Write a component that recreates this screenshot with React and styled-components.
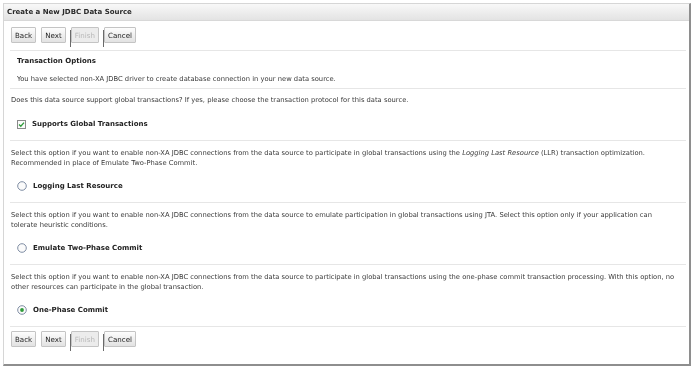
import React from "react";
import styled, { createGlobalStyle } from "styled-components";

const GlobalStyle = createGlobalStyle`
  body {
    margin: 0;
    background: #fff;
    font-family: "DejaVu Sans", Verdana, sans-serif;
    color: #333;
    -webkit-font-smoothing: antialiased;
  }
`;

const Page = styled.div`
  width: 693px;
  height: 368px;
  box-sizing: border-box;
  padding: 3px 2px 2px 3px;
`;

const Frame = styled.div`
  height: 100%;
  box-sizing: border-box;
  border-top: 1px solid #d6d6d6;
  border-left: 1px solid #d6d6d6;
  border-right: 2px solid #8e8e8e;
  border-bottom: 2px solid #8e8e8e;
  display: flex;
  flex-direction: column;
  will-change: transform;
`;

const TitleBar = styled.div`
  height: 16px;
  line-height: 16px;
  padding-left: 3px;
  border-bottom: 1px solid #d8d8d8;
  background: linear-gradient(#f8f8f8, #e3e3e3);
  font-size: 7px;
  font-weight: bold;
  color: #2a2a2a;
`;

const Content = styled.div`
  padding: 0 3px 0 6px;
`;

const ButtonBar = styled.div`
  display: flex;
  gap: 5px;
  padding: ${(p) => (p.$bottom ? "4px 0 0 1px" : "6px 0 7px 1px")};
`;

const Button = styled.button`
  position: relative;
  height: 16px;
  padding: 0 3px;
  margin: 0;
  font-family: "DejaVu Sans", Verdana, sans-serif;
  font-size: 7.1px;
  color: ${(p) => (p.disabled ? "#b8b8b8" : "#222")};
  border: 1px solid #c4c4c4;
  border-radius: 1px;
  background: ${(p) =>
    p.disabled ? "#ececec" : "linear-gradient(#fdfdfd, #e2e2e2)"};

  ${(p) =>
    p.$mark &&
    `
    &::before {
      content: "";
      position: absolute;
      left: -2px;
      top: 2px;
      width: 1px;
      height: 17px;
      background: #6a6a6a;
    }
  `}
`;

const Section = styled.div`
  border-top: 1px solid #e6e6e6;
  padding: ${(p) => p.$pad};
  display: flex;
  flex-direction: column;
`;

const Heading = styled.div`
  font-size: 7px;
  font-weight: bold;
  line-height: 10px;
  padding-left: 7px;
  color: #222;
`;

const Text = styled.div`
  font-size: 6.75px;
  line-height: 10px;
  padding-left: ${(p) => (p.$indent ? "7px" : "1px")};
  margin-top: ${(p) => p.$top || 0}px;
  color: #3a3a3a;
  white-space: nowrap;

  em {
    font-style: italic;
  }
`;

const OptionRow = styled.label`
  display: flex;
  align-items: center;
  gap: 6px;
  height: 12px;
  padding-left: 7px;
  margin-top: ${(p) => p.$top}px;
`;

const OptionLabel = styled.span`
  font-size: 7px;
  font-weight: bold;
  color: #222;
`;

const Checkbox = () => (
  <svg width="9" height="9" viewBox="0 0 9 9">
    <rect x="0.5" y="0.5" width="8" height="8" fill="#fbfbfb" stroke="#8a8a8a" />
    <path d="M2 4.5 L3.8 6.3 L7 2.6" fill="none" stroke="#2f9b3a" strokeWidth="1.3" />
  </svg>
);

const Radio = ({ checked }) => (
  <svg width="10" height="10" viewBox="0 0 10 10">
    <circle cx="5" cy="5" r="4.3" fill="#fbfbfb" stroke="#72819a" strokeWidth="0.9" />
    {checked && <circle cx="5" cy="5" r="1.9" fill="#2f9b3a" />}
  </svg>
);

const Buttons = ({ bottom }) => (
  <ButtonBar $bottom={bottom}>
    <Button>Back</Button>
    <Button>Next</Button>
    <Button disabled $mark>
      Finish
    </Button>
    <Button $mark>Cancel</Button>
  </ButtonBar>
);

const options = [
  {
    text: (
      <>
        Select this option if you want to enable non-XA JDBC connections from the data source to
        participate in global transactions using the <em>Logging Last Resource</em> (LLR)
        transaction optimization.
        <br />
        Recommended in place of Emulate Two-Phase Commit.
      </>
    ),
    label: "Logging Last Resource",
  },
  {
    text: (
      <>
        Select this option if you want to enable non-XA JDBC connections from the data source to
        emulate participation in global transactions using JTA. Select this option only if your
        application can
        <br />
        tolerate heuristic conditions.
      </>
    ),
    label: "Emulate Two-Phase Commit",
  },
  {
    text: (
      <>
        Select this option if you want to enable non-XA JDBC connections from the data source to
        participate in global transactions using the one-phase commit transaction processing. With
        this option, no
        <br />
        other resources can participate in the global transaction.
      </>
    ),
    label: "One-Phase Commit",
    checked: true,
  },
];

export default function App() {
  return (
    <Page>
      <GlobalStyle />
      <Frame>
        <TitleBar>Create a New JDBC Data Source</TitleBar>
        <Content>
          <Buttons />
          <Section $pad="5px 0 4px">
            <Heading>Transaction Options</Heading>
            <Text $indent $top={8}>
              You have selected non-XA JDBC driver to create database connection in your new data
              source.
            </Text>
          </Section>
          <Section $pad="6px 0 10px">
            <Text>
              Does this data source support global transactions? If yes, please choose the
              transaction protocol for this data source.
            </Text>
            <OptionRow $top={13}>
              <Checkbox />
              <OptionLabel>Supports Global Transactions</OptionLabel>
            </OptionRow>
          </Section>
          {options.map((o) => (
            <Section key={o.label} $pad="7px 0 10px">
              <Text>{o.text}</Text>
              <OptionRow $top={12}>
                <Radio checked={o.checked} />
                <OptionLabel>{o.label}</OptionLabel>
              </OptionRow>
            </Section>
          ))}
          <Section $pad="0">
            <Buttons bottom />
          </Section>
        </Content>
      </Frame>
    </Page>
  );
}
